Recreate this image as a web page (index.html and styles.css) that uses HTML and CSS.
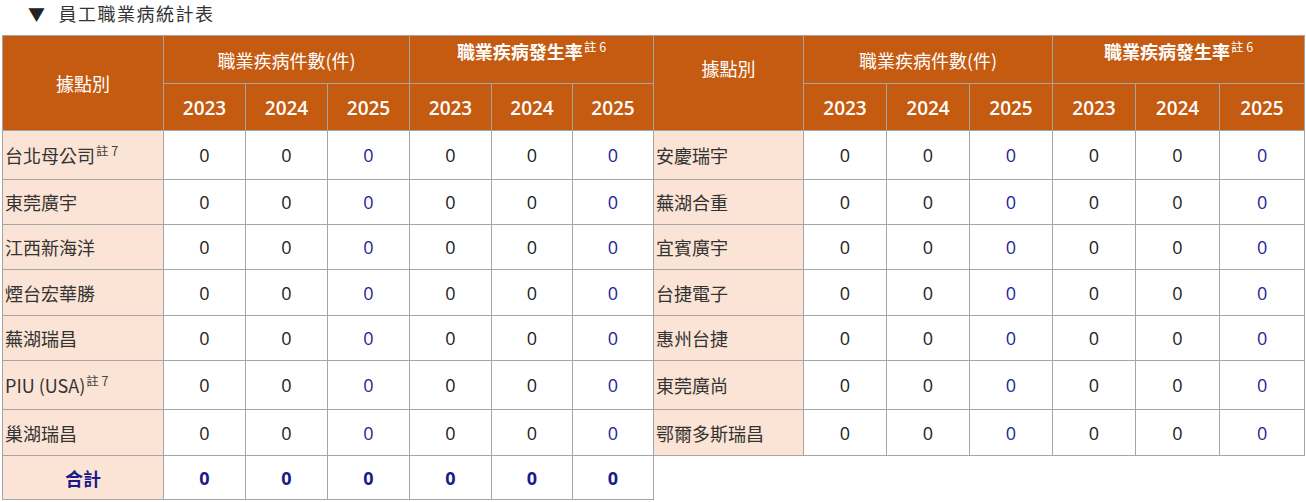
FILE: index.html
```html
<!DOCTYPE html>
<html lang="zh-Hant">
<head>
<meta charset="utf-8">
<link rel="stylesheet" href="styles.css">
</head>
<body>
<div class="title"><span class="arrow">▼</span>員工職業病統計表</div>
<table class="stats">
  <colgroup>
    <col class="c-name-l"><col class="c82"><col class="c82"><col class="c82"><col class="c82"><col class="c81"><col class="c81">
    <col class="c-name-r"><col class="c83"><col class="c83"><col class="c83"><col class="c83"><col class="c84"><col class="c85">
  </colgroup>
  <thead>
    <tr class="h1">
      <th rowspan="2" class="site">據點別</th>
      <th colspan="3">職業疾病件數(件)</th>
      <th colspan="3" class="rate">職業疾病發生率<sup>註 6</sup></th>
      <th rowspan="2" class="site site-r">據點別</th>
      <th colspan="3">職業疾病件數(件)</th>
      <th colspan="3" class="rate">職業疾病發生率<sup>註 6</sup></th>
    </tr>
    <tr class="h2">
      <th class="yr">2023</th><th class="yr">2024</th><th class="yr">2025</th>
      <th class="yr">2023</th><th class="yr">2024</th><th class="yr">2025</th>
      <th class="yr">2023</th><th class="yr">2024</th><th class="yr">2025</th>
      <th class="yr">2023</th><th class="yr">2024</th><th class="yr">2025</th>
    </tr>
  </thead>
  <tbody>
    <tr class="tall">
      <td class="name">台北母公司<sup>註 7</sup></td>
      <td>0</td><td>0</td><td class="b">0</td><td>0</td><td>0</td><td class="b">0</td>
      <td class="name">安慶瑞宇</td>
      <td>0</td><td>0</td><td class="b">0</td><td>0</td><td>0</td><td class="b">0</td>
    </tr>
    <tr>
      <td class="name">東莞廣宇</td>
      <td>0</td><td>0</td><td class="b">0</td><td>0</td><td>0</td><td class="b">0</td>
      <td class="name">蕪湖合重</td>
      <td>0</td><td>0</td><td class="b">0</td><td>0</td><td>0</td><td class="b">0</td>
    </tr>
    <tr>
      <td class="name">江西新海洋</td>
      <td>0</td><td>0</td><td class="b">0</td><td>0</td><td>0</td><td class="b">0</td>
      <td class="name">宜賓廣宇</td>
      <td>0</td><td>0</td><td class="b">0</td><td>0</td><td>0</td><td class="b">0</td>
    </tr>
    <tr class="mid">
      <td class="name">煙台宏華勝</td>
      <td>0</td><td>0</td><td class="b">0</td><td>0</td><td>0</td><td class="b">0</td>
      <td class="name">台捷電子</td>
      <td>0</td><td>0</td><td class="b">0</td><td>0</td><td>0</td><td class="b">0</td>
    </tr>
    <tr>
      <td class="name">蕪湖瑞昌</td>
      <td>0</td><td>0</td><td class="b">0</td><td>0</td><td>0</td><td class="b">0</td>
      <td class="name">惠州台捷</td>
      <td>0</td><td>0</td><td class="b">0</td><td>0</td><td>0</td><td class="b">0</td>
    </tr>
    <tr class="tall">
      <td class="name">PIU (USA)<sup>註 7</sup></td>
      <td>0</td><td>0</td><td class="b">0</td><td>0</td><td>0</td><td class="b">0</td>
      <td class="name">東莞廣尚</td>
      <td>0</td><td>0</td><td class="b">0</td><td>0</td><td>0</td><td class="b">0</td>
    </tr>
    <tr class="mid">
      <td class="name">巢湖瑞昌</td>
      <td>0</td><td>0</td><td class="b">0</td><td>0</td><td>0</td><td class="b">0</td>
      <td class="name">鄂爾多斯瑞昌</td>
      <td>0</td><td>0</td><td class="b">0</td><td>0</td><td>0</td><td class="b">0</td>
    </tr>
    <tr class="total">
      <td class="name tot">合計</td>
      <td class="tv">0</td><td class="tv">0</td><td class="tv">0</td><td class="tv">0</td><td class="tv">0</td><td class="tv">0</td>
      <td class="empty" colspan="7"></td>
    </tr>
  </tbody>
</table>
</body>
</html>
```

FILE: styles.css
```css
html, body {
  margin: 0;
  padding: 0;
  background: #ffffff;
}
body {
  font-family: "Open Sans", "Noto Sans CJK TC", sans-serif;
  color: #222222;
}
.title {
  height: 35px;
  line-height: 27px;
  padding-left: 28px;
  font-size: 18px;
  letter-spacing: 1.5px;
  color: #333333;
  font-family: "Noto Sans CJK TC", sans-serif;
}
.arrow {
  display: inline-block;
  margin-right: 12px;
  font-size: 17px;
  color: #222;
}
.stats {
  margin-left: 2px;
  border-collapse: collapse;
  table-layout: fixed;
  width: 1302px;
  font-size: 18px;
}
.c-name-l { width: 161px; }
.c-name-r { width: 150px; }
.c81 { width: 81px; }
.c82 { width: 82px; }
.c83 { width: 83px; }
.c84 { width: 84px; }
.c85 { width: 85px; }
.stats th, .stats td {
  border: 1px solid #a5a5a5;
  padding: 0;
  text-align: center;
  vertical-align: middle;
  line-height: 24px;
}
.stats th {
  background: #c55a11;
  color: #ffffff;
  font-weight: 400;
  font-family: "Noto Sans CJK TC", sans-serif;
  font-size: 18px;
}
.stats tr.h1 th { height: 47px; }
.stats tr.h2 th { height: 44px; }
.stats th.yr {
  font-family: "Open Sans", sans-serif;
  font-weight: 600;
  font-size: 19px;
  padding-top: 2px;
}
.stats tr.h1 th.rate {
  font-weight: 700;
  height: 29px;
  padding-bottom: 18px;
}
.stats th.site-r {
  padding-bottom: 30px;
}
.stats sup {
  font-size: 12.5px;
  line-height: 0;
  vertical-align: 7px;
  margin-left: 1px;
  font-weight: 400;
}
.stats td {
  height: 44px;
  color: #222222;
}
.stats tr.mid td { height: 45px; }
.stats tr.tall td { height: 48px; }
.stats tr.total td { height: 43px; }
.stats td.name {
  background: #fbe4d5;
  text-align: left;
  padding-left: 2px;
  font-family: "Noto Sans CJK TC", sans-serif;
  color: #333333;
}
.stats td.name sup { color: #444; }
.stats td.b {
  color: #1f1f99;
}
.stats td.tot {
  text-align: center;
  padding-left: 0;
  font-weight: 700;
  color: #1a1a8a;
}
.stats td.tv {
  font-weight: 700;
  color: #1a1a8a;
}
.stats td.empty {
  border: none;
  background: #ffffff;
}
```
